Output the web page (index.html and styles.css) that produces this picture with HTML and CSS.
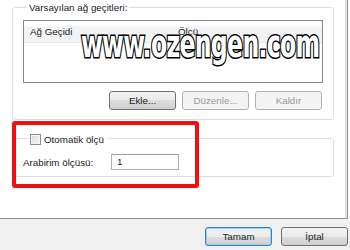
FILE: index.html
```html
<!DOCTYPE html>
<html lang="tr">
<head>
<meta charset="utf-8">
<link rel="stylesheet" href="styles.css">
</head>
<body>
<div class="dialog">
  <div class="tabpage">
    <fieldset class="group group-gw">
      <legend class="legend">Varsayılan ağ geçitleri:</legend>
      <div class="listview">
        <div class="lv-header">
          <span class="col col-gw">Ağ Geçidi</span>
          <span class="col col-metric">Ölçü</span>
        </div>
      </div>
      <div class="btn-row">
        <button class="btn">Ekle...</button>
        <button class="btn" disabled>Düzenle...</button>
        <button class="btn" disabled>Kaldır</button>
      </div>
    </fieldset>
    <fieldset class="group group-metric">
      <legend class="legend legend-check">
        <span class="checkbox"></span>
        <span>Otomatik ölçü</span>
      </legend>
      <div class="field-row">
        <span class="field-label">Arabirim ölçüsü:</span>
        <span class="textbox">1</span>
      </div>
    </fieldset>
    <div class="highlight"></div>
    <div class="watermark">www.ozengen.com</div>
  </div>
  <div class="footer">
    <button class="btn btn-default">Tamam</button>
    <button class="btn">İptal</button>
  </div>
</div>
</body>
</html>
```
FILE: styles.css
```css
html, body {
  margin: 0;
  padding: 0;
  background: #ffffff;
}
body {
  font-family: "Liberation Sans", "Noto Sans", sans-serif;
  font-size: 9.8px;
  color: #222222;
}
.dialog {
  width: 350px;
  height: 250px;
  overflow: hidden;
  display: flex;
  flex-direction: column;
}
.tabpage {
  position: relative;
  box-sizing: border-box;
  width: 348px;
  height: 219px;
  background: #ffffff;
  border-right: 1px solid #8e9196;
  border-bottom: 1px solid #8e9196;
  box-shadow: inset -2px 0 0 #e3e3e3;
  padding: 0 13px 0 12px;
}
.group {
  margin: 0;
  padding: 0 10px;
  border: 1px solid #d8dfe4;
  border-radius: 3px;
  min-inline-size: 0;
}
.legend {
  padding: 0 2px;
  margin-left: 4px;
  line-height: 15px;
  height: 15px;
}
.group-gw {
  height: 120px;
  box-sizing: border-box;
  padding-top: 5px;
}
.listview {
  height: 63px;
  box-sizing: border-box;
  border: 1px solid #838790;
  background: #ffffff;
}
.lv-header {
  height: 21px;
  display: flex;
  align-items: center;
  background: linear-gradient(#ffffff 0%, #ffffff 20%, #f2f3f5 30%, #f2f3f5 100%);
  border-bottom: 1px solid #e6e8eb;
}
.col-gw {
  width: 148px;
  padding-left: 6px;
}
.btn-row {
  display: flex;
  justify-content: flex-end;
  gap: 6px;
  margin-top: 8px;
  padding-right: 1px;
}
.btn {
  width: 67px;
  height: 19px;
  box-sizing: border-box;
  font-family: inherit;
  font-size: 9.8px;
  color: #222222;
  border: 1px solid #707070;
  border-radius: 3px;
  background: linear-gradient(#f2f2f2 0%, #ebebeb 50%, #dddddd 50%, #cfcfcf 100%);
  padding: 0;
  line-height: 16px;
}
.btn:disabled {
  color: #9a9a9a;
  border-color: #adb2b5;
  background: #f4f4f4;
}
.group-metric {
  margin-top: 10px;
  height: 47px;
  box-sizing: border-box;
  padding-top: 7px;
}
.legend-check {
  display: flex;
  align-items: center;
  gap: 3px;
  margin-left: 6px;
  padding: 2px 3px 0 1px;
}
.checkbox {
  width: 9px;
  height: 9px;
  border: 1px solid #8f8f8f;
  background: linear-gradient(135deg, #dcdcdc, #f8f8f8);
  box-shadow: inset 0 0 0 1px #f4f4f4;
}
.field-row {
  display: flex;
  align-items: center;
}
.field-label {
  width: 88px;
}
.textbox {
  width: 68px;
  height: 16px;
  box-sizing: border-box;
  border: 1px solid #a4b3c2;
  border-top-color: #8e9fb0;
  padding-left: 5px;
  line-height: 14px;
  background: #ffffff;
}
.highlight {
  position: absolute;
  left: 12px;
  top: 121px;
  width: 187px;
  height: 67px;
  box-sizing: border-box;
  border: 4px solid #ee1111;
  border-radius: 3px;
}
.watermark {
  position: absolute;
  left: 81px;
  top: 22px;
  font-family: "DejaVu Sans Condensed", "DejaVu Sans", sans-serif;
  font-weight: bold;
  font-size: 38px;
  line-height: 44px;
  color: #ffffff;
  -webkit-text-stroke: 3px #000000;
  paint-order: stroke fill;
  transform-origin: left top;
  transform: scaleX(0.69);
  letter-spacing: -1px;
  white-space: nowrap;
}
.footer {
  flex: 1;
  background: #f0f0f0;
  display: flex;
  justify-content: flex-end;
  align-items: flex-start;
  gap: 9px;
  padding: 8px 2px 0 0;
}
.btn-default {
  border-color: #3c7fb1;
  box-shadow: inset 0 0 0 1px #8fd3f8;
}
```
